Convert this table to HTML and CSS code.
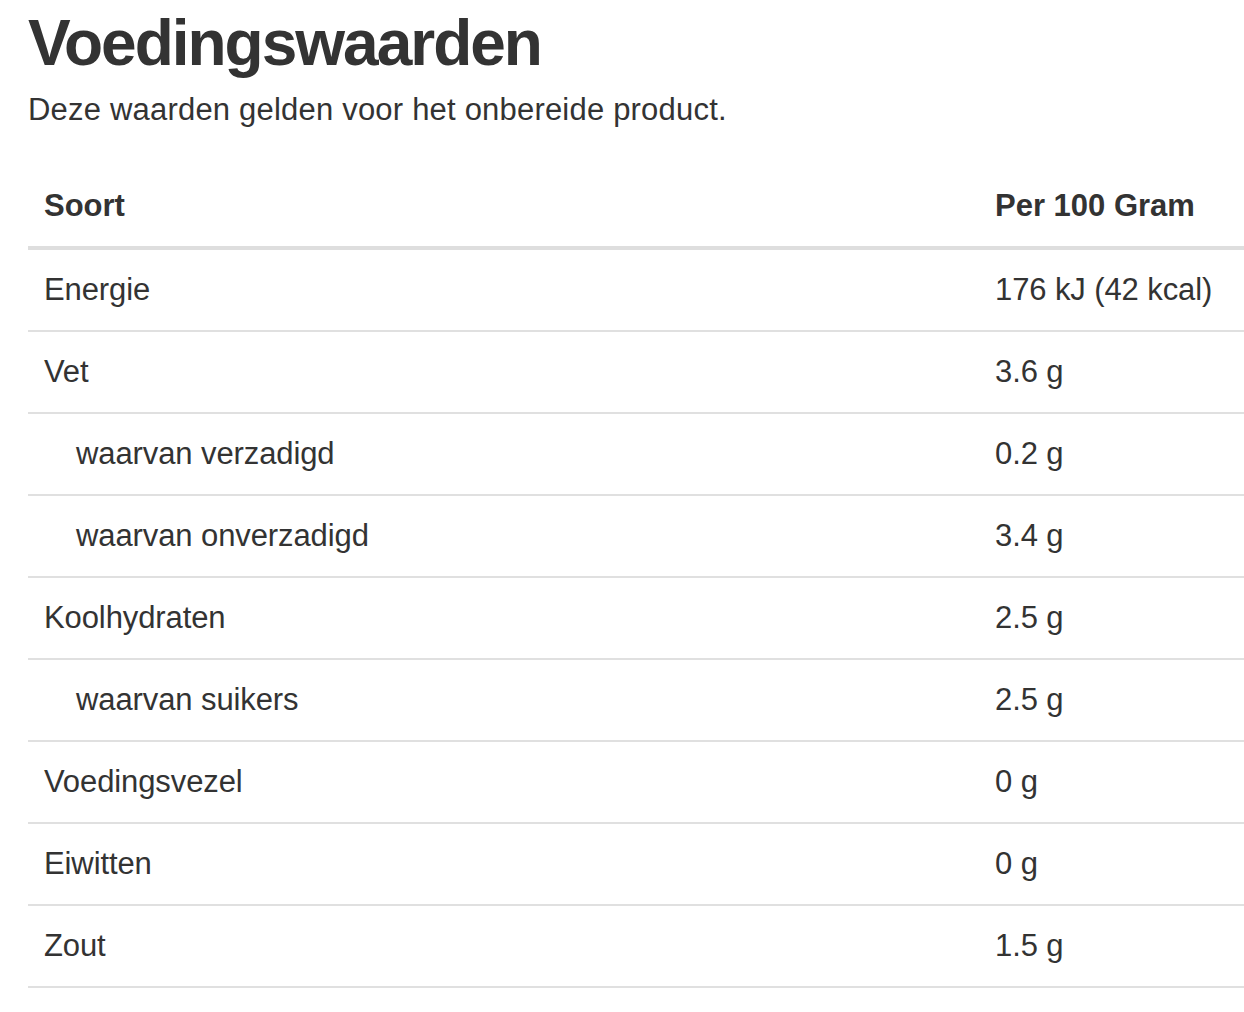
FILE: index.html
```html
<!DOCTYPE html>
<html lang="nl">
<head>
<meta charset="utf-8">
<title>Voedingswaarden</title>
<link rel="stylesheet" href="styles.css">
</head>
<body>
<section class="nutrition">
  <h1 class="nutrition__title">Voedingswaarden</h1>
  <p class="nutrition__intro">Deze waarden gelden voor het onbereide product.</p>
  <table class="nutrition__table">
    <thead>
      <tr>
        <th class="col-name">Soort</th>
        <th class="col-value">Per 100 Gram</th>
      </tr>
    </thead>
    <tbody>
      <tr><td>Energie</td><td>176 kJ (42 kcal)</td></tr>
      <tr><td>Vet</td><td>3.6 g</td></tr>
      <tr><td class="sub">waarvan verzadigd</td><td>0.2 g</td></tr>
      <tr><td class="sub">waarvan onverzadigd</td><td>3.4 g</td></tr>
      <tr><td>Koolhydraten</td><td>2.5 g</td></tr>
      <tr><td class="sub">waarvan suikers</td><td>2.5 g</td></tr>
      <tr><td>Voedingsvezel</td><td>0 g</td></tr>
      <tr><td>Eiwitten</td><td>0 g</td></tr>
      <tr><td>Zout</td><td>1.5 g</td></tr>
    </tbody>
  </table>
</section>
</body>
</html>
```
FILE: styles.css
```css
html, body {
  margin: 0;
  padding: 0;
  background: #ffffff;
}

body {
  font-family: "Liberation Sans", Arial, sans-serif;
  color: #333333;
}

.nutrition {
  padding: 5px 0 0 28px;
}

.nutrition__title {
  margin: 0;
  font-size: 64px;
  line-height: 76px;
  font-weight: 700;
  letter-spacing: -2px;
  color: #333333;
}

.nutrition__intro {
  margin: 9px 0 0 0;
  font-size: 31px;
  line-height: 40px;
  letter-spacing: 0.2px;
}

.nutrition__table {
  margin-top: 36px;
  width: 100%;
  border-collapse: separate;
  border-spacing: 0;
  font-size: 31px;
}

.nutrition__table th,
.nutrition__table td {
  padding: 20px 16px;
  line-height: 40px;
  text-align: left;
  vertical-align: middle;
  white-space: nowrap;
}

.nutrition__table th {
  font-weight: 700;
  border-bottom: 4px solid #dedede;
}

.nutrition__table td {
  font-weight: 400;
  letter-spacing: -0.1px;
  border-bottom: 2px solid #e0e0e0;
}

.nutrition__table .col-value {
  width: 233px;
}

.nutrition__table td.sub {
  padding-left: 48px;
}
```
